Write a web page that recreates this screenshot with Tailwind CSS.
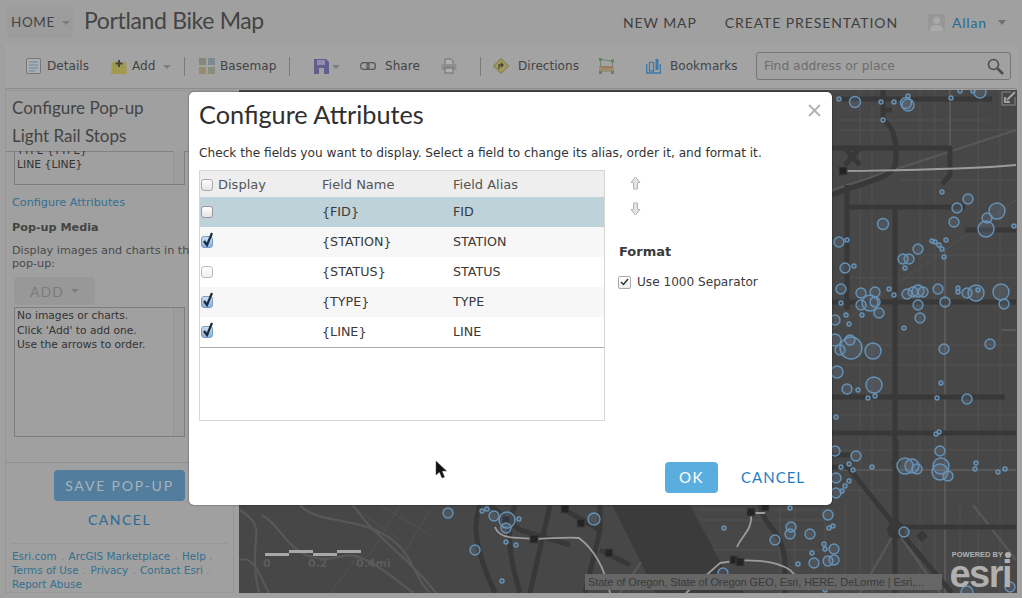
<!DOCTYPE html>
<html lang="en">
<head>
<meta charset="UTF-8">
<title>Portland Bike Map</title>
<script src="https://cdn.jsdelivr.net/npm/@tailwindcss/browser@4"></script>
</head>
<body class="bg-[#a0a0a0]">
<div class="relative w-[1022px] h-[598px] overflow-hidden bg-[#a0a0a0] font-['DejaVu_Sans',sans-serif] text-[#3c3c3c]">

  <!-- Top header -->
  <header class="flex items-center h-[44px] pl-[7px] font-['Lato',sans-serif]">
    <div class="flex items-center w-[66px] h-[31px] rounded bg-[#9c9c9c] pl-[4px] text-[13.500px] tracking-[0.6px] text-[#444]">HOME<span class="ml-[7px] mt-[1px] border-x-[4px] border-t-[4px] border-x-transparent border-t-[#7d7d7d]"></span></div>
    <h1 class="ml-[11px] text-[23px] leading-none text-[#444] pb-[4px] tracking-[-0.35px]">Portland Bike Map</h1>
    <a class="ml-auto text-[14px] tracking-[0.9px] text-[#3f3f3f]">NEW MAP</a>
    <a class="ml-[28px] text-[14px] tracking-[0.9px] text-[#3f3f3f]">CREATE PRESENTATION</a>
    <svg class="ml-[30px]" width="17" height="17" viewBox="0 0 17 17"><rect width="17" height="17" fill="#979797"/><circle cx="8.5" cy="6.5" r="3.6" fill="#a9a9a9"/><path d="M2 17c0-5 3-6 6.500-6s6.500 1 6.500 6z" fill="#a9a9a9"/></svg>
    <span class="ml-[7px] text-[14px] tracking-[0.8px] text-[#2a6a94] w-[46px]">Allan</span>
    <span class="border-x-[4px] border-t-[5px] border-x-transparent border-t-[#6f6f6f] mr-[16px]"></span>
  </header>

  <!-- Toolbar -->
  <div class="flex items-center h-[45px] ml-[5px] mr-[5px] bg-[#a3a3a3] border-b border-[#8c8c8c] text-[12.100px] text-[#444] whitespace-nowrap">
    <svg class="ml-[21px]" width="15" height="16" viewBox="0 0 15 16"><rect x=".5" y=".5" width="14" height="15" rx="1.500" fill="#a9aeb2" stroke="#777"/><path d="M3 4h9M3 7h9M3 10h9M3 13h6" stroke="#6f8496"/></svg>
    <span class="ml-[6px] w-[41px]">Details</span>
    <svg class="ml-[23px]" width="16" height="15" viewBox="0 0 16 15"><path d="M1 3h14l1 12H0z" fill="#a29a4e"/><path d="M8 1v7M4.500 4.500h7" stroke="#444" stroke-width="2"/></svg>
    <span class="ml-[5px] w-[23px]">Add</span>
    <span class="ml-[8px] mt-[2px] border-x-[4px] border-t-[4px] border-x-transparent border-t-[#7d7d7d]"></span>
    <span class="ml-[13px] w-px h-[19px] bg-[#7b7b7b]"></span>
    <svg class="ml-[14px]" width="16" height="16" viewBox="0 0 16 16"><rect width="7" height="7" fill="#86867c"/><rect x="9" width="7" height="7" fill="#7a8a92"/><rect y="9" width="7" height="7" fill="#988c6c"/><rect x="9" y="9" width="7" height="7" fill="#84907c"/></svg>
    <span class="ml-[5px] w-[55px]">Basemap</span>
    <span class="ml-[14px] w-px h-[19px] bg-[#7b7b7b]"></span>
    <svg class="ml-[24px]" width="15" height="15" viewBox="0 0 15 15"><path d="M0 0h12l3 3v12H0z" fill="#635f8c"/><rect x="3" y="1" width="8" height="5" fill="#8f8db0"/><rect x="5" y="9" width="5" height="6" fill="#a0a0a0"/></svg>
    <span class="ml-[3px] mt-[2px] border-x-[4px] border-t-[4px] border-x-transparent border-t-[#7d7d7d]"></span>
    <svg class="ml-[20px]" width="16" height="8" viewBox="0 0 16 8" fill="none" stroke="#555" stroke-width="1.200"><rect x=".6" y=".6" width="8.500" height="6.800" rx="3"/><rect x="6.900" y=".6" width="8.500" height="6.800" rx="3"/></svg>
    <span class="ml-[9px] w-[35px]">Share</span>
    <svg class="ml-[21px]" width="16" height="16" viewBox="0 0 16 16"><path d="M4 6V1h6l2 2v3" fill="#b0b0b0" stroke="#6f6f6f"/><rect x=".5" y="6" width="15" height="6" rx="1.500" fill="#8e8e8e"/><rect x="4" y="10" width="8" height="5" fill="#b0b0b0" stroke="#6f6f6f"/></svg>
    <span class="ml-[23px] w-px h-[19px] bg-[#7b7b7b]"></span>
    <svg class="ml-[12px]" width="16" height="16" viewBox="0 0 16 16"><path d="M8 .5L15.500 8 8 15.500.5 8z" fill="#a2985c" stroke="#77704a"/><path d="M6 11V7h4M8 5l2 2-2 2" fill="none" stroke="#444" stroke-width="1.300"/></svg>
    <span class="ml-[9px] w-[60px]">Directions</span>
    <svg class="ml-[21px]" width="15" height="16" viewBox="0 0 15 16"><path d="M1.500 1.500L13.500 3v10H1.500z" fill="none" stroke="#66896a"/><rect y="8" width="15" height="5" fill="#a3896a"/><path d="M3 8v2M6 8v2M9 8v2M12 8v2" stroke="#7a6a50"/><g fill="#5a8a5c"><rect width="3" height="3"/><rect x="12" y="1.500" width="3" height="3"/><rect y="13" width="3" height="3"/><rect x="12" y="13" width="3" height="3"/></g></svg>
    <svg class="ml-[32px]" width="15" height="15" viewBox="0 0 15 15" fill="none" stroke="#3f7aa8" stroke-width="1.300"><path d="M.7 5v9h13.600V5"/><path d="M7.500 14V4C6.500 3 5 3 3.500 3.500V12c1.500-.5 3-.5 4 1"/><rect x="9.500" y="0" width="3" height="11" fill="#3f7aa8" stroke="none"/></svg>
    <span class="ml-[9px] w-[67px]">Bookmarks</span>
    <div class="flex items-center justify-between ml-[19px] w-[255px] h-[28px] rounded-[3px] border border-[#767676] bg-[#a1a1a1] pl-[7px] pr-[6px] text-[12.300px] text-[#6d6d6d]">
      <span>Find address or place</span>
      <svg width="17" height="17" viewBox="0 0 17 17" fill="none" stroke="#4d4d4d"><circle cx="6.500" cy="6.500" r="5" stroke-width="1.600"/><path d="M10.500 10.500L16 16" stroke-width="2.600"/></svg>
    </div>
  </div>

  <!-- Main -->
  <div class="flex h-[505px] ml-[5px] mr-[5px] mt-[1px]">
    <aside class="flex flex-col w-[229px] h-[503px] border border-[#979797] text-[11.200px]">
      <div class="h-[61px] pl-[6px] font-['Lato',sans-serif] text-[17px] leading-[28px] text-[#444] pt-[3px] border-b border-[#828282]">
        <div>Configure Pop-up</div>
        <div>Light Rail Stops</div>
      </div>
      <div class="flex-1 pl-[8px] min-h-0">
        <div class="relative w-[171px] h-[34px] -mt-px border border-[#7d7d7d] border-t-0 overflow-hidden text-[10.800px] leading-[14px] pl-[2px] text-[#333]">
          <div class="-mt-[7px]">TYPE {TYPE}</div>
          <div>LINE {LINE}</div>
          <span class="absolute right-0 top-0 bottom-0 w-[11px] border-l border-[#949494] bg-[#9c9c9c]"></span>
        </div>
        <a class="block -ml-[2px] mt-[10px] leading-[15px] text-[#33708f]">Configure Attributes</a>
        <div class="-ml-[2px] mt-[10px] font-bold leading-[15px] text-[#444]">Pop-up Media</div>
        <p class="-ml-[2px] mt-[9px] w-[230px] leading-[13px] text-[#4a4a4a] whitespace-nowrap">Display images and charts in the<br>pop-up:</p>
        <div class="flex items-center justify-center gap-[7px] w-[81px] h-[28px] mt-[7px] rounded bg-[#989898] font-['Lato',sans-serif] text-[14px] tracking-[1px] text-[#7c7c7c]">ADD<span class="border-x-[4px] border-t-[4px] border-x-transparent border-t-[#7d7d7d]"></span></div>
        <div class="relative w-[171px] h-[130px] mt-[2px] border border-[#7d7d7d] text-[10.700px] leading-[14.500px] pl-[2px] pt-[1px] text-[#333]">
          No images or charts.<br>Click 'Add' to add one.<br>Use the arrows to order.
          <span class="absolute right-0 top-0 bottom-0 w-[11px] border-l border-[#949494] bg-[#9c9c9c]"></span>
        </div>
      </div>
      <div class="h-[130px] shrink-0 border-t border-[#8d8d8d] flex flex-col items-center font-['Lato',sans-serif]">
        <div class="flex items-center justify-center w-[131px] h-[31px] mt-[7px] rounded bg-[#527d9c] text-[14px] tracking-[1.800px] text-[#a6b3bc]">SAVE POP-UP</div>
        <div class="mt-[8px] text-[14px] tracking-[1.500px] text-[#2a6a94]">CANCEL</div>
        <div class="self-stretch mx-[5px] mt-[13px] pt-[5px] border-t border-[#979797] pl-[1px] font-['DejaVu_Sans',sans-serif] text-[10.400px] leading-[14px] text-[#35708f]">
          <div>Esri.com <span class="text-[#808080] mx-[1px]">.</span> ArcGIS Marketplace <span class="text-[#808080] mx-[1px]">.</span> Help <span class="text-[#808080]">.</span></div>
          <div>Terms of Use <span class="text-[#808080] mx-[1px]">.</span> Privacy <span class="text-[#808080] mx-[1px]">.</span> Contact Esri <span class="text-[#808080]">.</span></div>
          <div>Report Abuse</div>
        </div>
      </div>
    </aside>

    <!-- Map -->
    <div class="relative ml-[5px] w-[778px] h-[503px] bg-[#474747] overflow-hidden">
      <svg class="absolute inset-0" width="778" height="503" viewBox="239 90 778 503" fill="none">
        <!-- street grid -->
        <g stroke="#525252" stroke-width="1">
          <path d="M840 130H1016M840 120H990M900 180H1016M900 255H1016M840 278H1016M840 345H1016M840 365H1016M840 415H1016M840 450H1016M840 490H1016M700 510H832M700 520H832M700 550H832"/>
          <path d="M860 90V593M872 90V593M920 90V593M935 90V593M978 90V593M1000 90V593M780 505V593M795 505V593M825 505V593M845 505V593M960 505V593"/>
          <path d="M832 330L1016 200M350 505l50 35M380 505l50 30M400 505l-30 50M430 510l-30 50M330 593l30-40"/>
        </g>
        <g stroke="#585858" stroke-width="2.200">
          <path d="M950 90V148M945 250V593M1002 330H1016M840 470H1016M973 505L1016 560M896 530L860 593M896 530L940 593"/>
          <path d="M240 510c12 8 18 14 16 28-1 16-3 28 3 55M262 515c18 10 25 35 50 42s30-8 52 2 34 24 50 34M300 505c15 18 55 12 85 30s25 38 45 58M239 560c15-5 20 15 30 33M436 593c-30-40-70-60-90-100M620 593l60-88M832 190L1016 130"/>
        </g>
        <!-- river -->
        <path d="M612 505H690L722 565L745 593H655L640 560Z" fill="#3b3b3b"/>
        <!-- main roads -->
        <g stroke="#383838" stroke-width="5" stroke-linejoin="round">
          <path d="M883 90V120C895 128 896 140 896 160C896 178 870 180 832 195M840 99H992M883 110H892"/>
          <path d="M832 148H950V175L942 184M845 148L860 165M860 148L845 165M847 185V310M847 207H965M895 207V593M965 230H1016M832 302H1016M832 397H1005M832 433H1016M820 467H848M848 467L896 527L952 593M896 527H1016M896 440V527M832 455H850"/>
          <path d="M480 505C470 530 480 560 495 593M515 505C505 530 510 560 520 593M520 530L570 545M550 505L530 593M565 510L600 530L585 593M600 505V530M760 505C765 530 780 525 785 560V593M600 550L630 565M490 505L520 530"/>
        </g>
        <circle cx="896" cy="530" r="9" fill="#383838"/>
        <path d="M896 457l6 6-6 6-6-6zM922 530l6 6-6 6-6-6z" fill="#383838"/>
        <!-- light rail -->
        <g stroke="#9c9c9c" stroke-width="1.800">
          <path d="M843 171C900 170 960 170 1016 165"/>
          <path d="M495 527C500 540 515 537 534 539C560 538 570 537 579 538C595 550 605 570 610 593"/>
          <path d="M686 593L720 563C745 558 775 560 790 570L809 590M737 547C742 535 753 530 751 513M751 513H765"/>
        </g>
        <g fill="#242424" stroke="#3f3f3f">
          <rect x="839" y="167" width="8" height="8"/><rect x="530" y="535" width="8" height="8"/><rect x="577" y="519" width="8" height="8"/><rect x="605" y="549" width="8" height="8"/><rect x="561" y="505" width="8" height="8"/><rect x="502" y="516" width="8" height="8"/><rect x="730" y="556" width="8" height="8"/><rect x="736" y="558" width="8" height="8"/><rect x="747" y="508" width="8" height="8"/><rect x="761" y="503" width="8" height="8"/>
        </g>
        <!-- stops -->
        <g fill="#7b98b8" fill-opacity=".18" stroke="#6593b8" stroke-width="1.400">
          <circle cx="839" cy="99" r="2"/><circle cx="855" cy="102" r="5.500"/><circle cx="881" cy="102" r="2"/><circle cx="894" cy="102" r="2"/><circle cx="906" cy="103" r="5.500"/><circle cx="908" cy="105" r="6"/><circle cx="883" cy="120" r="2"/><circle cx="951" cy="98" r="2"/><circle cx="980" cy="92" r="6"/><circle cx="960" cy="91" r="2"/><circle cx="973" cy="91" r="2"/><circle cx="908" cy="96" r="2"/>
          <circle cx="942" cy="192" r="2"/><circle cx="968" cy="199" r="5"/><circle cx="957" cy="208" r="5"/><circle cx="997" cy="211" r="8"/><circle cx="987" cy="218" r="5"/><circle cx="954" cy="222" r="5"/><circle cx="986" cy="229" r="8"/><circle cx="1014" cy="226" r="2"/><circle cx="883" cy="224" r="5.500"/><circle cx="839" cy="242" r="5"/><circle cx="847" cy="240" r="2"/><circle cx="918" cy="249" r="5"/><circle cx="932" cy="241" r="2"/><circle cx="935" cy="242" r="2"/><circle cx="939" cy="245" r="2"/><circle cx="942" cy="249" r="2"/><circle cx="946" cy="240" r="2"/><circle cx="944" cy="257" r="2"/><circle cx="903" cy="259" r="5"/><circle cx="909" cy="259" r="5"/><circle cx="905" cy="268" r="2"/><circle cx="845" cy="268" r="5"/><circle cx="854" cy="266" r="2"/>
          <circle cx="841" cy="289" r="5"/><circle cx="861" cy="293" r="5"/><circle cx="875" cy="292" r="5"/><circle cx="889" cy="289" r="2"/><circle cx="894" cy="295" r="2"/><circle cx="907" cy="294" r="5"/><circle cx="913" cy="292" r="5"/><circle cx="918" cy="291" r="6"/><circle cx="923" cy="292" r="5"/><circle cx="938" cy="289" r="5"/><circle cx="945" cy="302" r="5"/><circle cx="958" cy="292" r="2"/><circle cx="958" cy="288" r="2"/><circle cx="967" cy="293" r="5"/><circle cx="976" cy="293" r="8"/><circle cx="1001" cy="292" r="8"/><circle cx="1004" cy="304" r="5"/><circle cx="978" cy="290" r="2"/><circle cx="870" cy="303" r="8"/><circle cx="861" cy="305" r="5"/><circle cx="875" cy="302" r="5"/><circle cx="879" cy="313" r="5"/><circle cx="918" cy="305" r="5"/><circle cx="920" cy="318" r="5"/><circle cx="841" cy="303" r="2"/><circle cx="846" cy="315" r="2"/><circle cx="862" cy="315" r="2"/><circle cx="849" cy="324" r="2"/><circle cx="835" cy="320" r="5"/><circle cx="904" cy="328" r="2"/><circle cx="835" cy="340" r="6"/><circle cx="850" cy="340" r="5"/>
          <circle cx="851" cy="348" r="11"/><circle cx="873" cy="351" r="8"/><circle cx="840" cy="350" r="5"/><circle cx="944" cy="349" r="5"/><circle cx="990" cy="344" r="5"/><circle cx="837" cy="372" r="6"/><circle cx="941" cy="383" r="2"/><circle cx="874" cy="385" r="8"/><circle cx="847" cy="389" r="5"/><circle cx="858" cy="390" r="2"/><circle cx="868" cy="398" r="2"/><circle cx="875" cy="396" r="2"/><circle cx="937" cy="398" r="2"/><circle cx="967" cy="399" r="5"/><circle cx="836" cy="417" r="2"/><circle cx="939" cy="432" r="2"/><circle cx="936" cy="434" r="2"/><circle cx="940" cy="451" r="5"/><circle cx="856" cy="456" r="5"/><circle cx="835" cy="451" r="5"/><circle cx="905" cy="466" r="8"/><circle cx="912" cy="466" r="7"/><circle cx="917" cy="469" r="5"/><circle cx="941" cy="466" r="8"/><circle cx="940" cy="472" r="8"/><circle cx="948" cy="476" r="5"/><circle cx="872" cy="467" r="2"/><circle cx="841" cy="467" r="2"/><circle cx="849" cy="464" r="2"/><circle cx="853" cy="470" r="2"/><circle cx="976" cy="463" r="2"/><circle cx="975" cy="469" r="2"/><circle cx="998" cy="472" r="2"/><circle cx="1005" cy="469" r="2"/><circle cx="836" cy="478" r="5"/><circle cx="849" cy="481" r="2"/><circle cx="845" cy="486" r="2"/><circle cx="842" cy="491" r="2"/><circle cx="836" cy="493" r="5"/>
          <circle cx="448" cy="513" r="5"/><circle cx="494" cy="516" r="5"/><circle cx="507" cy="520" r="8"/><circle cx="506" cy="528" r="5"/><circle cx="482" cy="511" r="2"/><circle cx="487" cy="509" r="2"/><circle cx="519" cy="519" r="2"/><circle cx="594" cy="519" r="6"/><circle cx="475" cy="550" r="5"/><circle cx="506" cy="542" r="2"/><circle cx="516" cy="545" r="2"/><circle cx="502" cy="581" r="2"/><circle cx="828" cy="515" r="5"/><circle cx="791" cy="527" r="5"/><circle cx="790" cy="534" r="5"/><circle cx="775" cy="540" r="5"/><circle cx="810" cy="534" r="5"/><circle cx="724" cy="528" r="2"/><circle cx="790" cy="508" r="2"/><circle cx="833" cy="526" r="2"/><circle cx="829" cy="528" r="2"/><circle cx="824" cy="544" r="2"/><circle cx="825" cy="549" r="2"/><circle cx="834" cy="549" r="5"/><circle cx="812" cy="553" r="2"/><circle cx="814" cy="563" r="5"/><circle cx="828" cy="561" r="5"/><circle cx="834" cy="560" r="5"/><circle cx="798" cy="564" r="2"/><circle cx="723" cy="573" r="5"/><circle cx="904" cy="532" r="5"/><circle cx="967" cy="592" r="6"/><circle cx="825" cy="590" r="2"/><circle cx="1010" cy="587" r="5"/>
        </g>
      </svg>

      <!-- edit icon -->
      <svg class="absolute right-[1px] top-[1px]" width="15" height="15" viewBox="0 0 15 15" fill="none"><path d="M10 1H1v13h13V6" stroke="#8a8a8a"/><path d="M14 1L6 9M4 6v5h5" stroke="#a0a0a0" stroke-width="2.200"/></svg>

      <!-- scale bar -->
      <div class="absolute left-[26px] top-[460px] flex items-start">
        <span class="w-[24px] h-[3px] mt-[3px] bg-[#a8a8a8]"></span><span class="w-[24px] h-[3px] bg-[#a8a8a8]"></span><span class="w-[24px] h-[3px] mt-[3px] bg-[#a8a8a8]"></span><span class="w-[24px] h-[3px] bg-[#a8a8a8]"></span>
      </div>
      <div class="absolute left-[24px] top-[466px] text-[11px] font-bold text-[#5c5c5c]">0</div>
      <div class="absolute left-[69px] top-[466px] text-[11px] font-bold text-[#5c5c5c]">0.2</div>
      <div class="absolute left-[117px] top-[466px] text-[11px] font-bold text-[#5c5c5c]">0.4mi</div>

      <!-- attribution -->
      <div class="absolute left-[346px] top-[484px] w-[357px] h-[16px] bg-[#666666] pl-[3px] font-['Liberation_Sans',sans-serif] text-[11px] leading-[16px] tracking-[-0.09px] text-[#3a3a3a] whitespace-nowrap overflow-hidden">State of Oregon, State of Oregon GEO, Esri, HERE, DeLorme | Esri,...</div>

      <!-- logo -->
      <div class="absolute right-[6px] bottom-[4px] flex flex-col items-end text-[#b0b0b0] font-['Liberation_Sans',sans-serif]">
        <div class="flex items-center gap-[2px] text-[7.500px] font-bold leading-[8px]">POWERED BY<span class="w-[6px] h-[6px] rounded-full bg-[#b0b0b0]"></span></div>
        <div class="text-[38px] font-bold leading-[30px] tracking-[-1.500px]">esri</div>
      </div>
    </div>
  </div>

  <!-- Modal -->
  <div class="absolute left-[189px] top-[92px] w-[643px] h-[413px] rounded-[5px] bg-white shadow-[0_0_2px_rgba(0,0,0,0.6)]">
    <h2 class="absolute left-[10px] top-[5px] font-['Lato',sans-serif] text-[25.300px] leading-[34px] text-[#2f2f2f]">Configure Attributes</h2>
    <svg class="absolute right-[11px] top-[12px]" width="13" height="13" viewBox="0 0 13 13" stroke="#b4b4b4" stroke-width="2"><path d="M1 1l11 11M12 1L1 12"/></svg>
    <p class="absolute left-[10px] top-[53px] text-[12.150px] leading-[16px] text-[#333] whitespace-nowrap">Check the fields you want to display. Select a field to change its alias, order it, and format it.</p>

    <!-- Fields table -->
    <div class="absolute left-[10px] top-[78px] w-[406px] h-[251px] border border-[#d8d8d0] text-[12.700px] text-[#3a3a3a]">
      <div class="grid grid-cols-[122px_131px_1fr] items-center h-[26px] pt-[1px] bg-[#eeeeee] text-[#555] text-[13px]">
        <div class="flex items-center"><span class="ml-[1px] w-[12px] h-[12px] rounded-[3px] border border-[#aaa] bg-gradient-to-b from-white to-[#e4e4e4]"></span><span class="ml-[5px]">Display</span></div><div>Field Name</div><div>Field Alias</div>
      </div>
      <div class="grid grid-cols-[122px_131px_1fr] items-center h-[30px] bg-[#bed2d9]">
        <div><span class="block ml-[1px] w-[12px] h-[12px] rounded-[3px] border border-[#999] bg-gradient-to-b from-white to-[#e4e4e4]"></span></div><div>{FID}</div><div>FID</div>
      </div>
      <div class="grid grid-cols-[122px_131px_1fr] items-center h-[30px] bg-[#f7f7f7]">
        <div class="relative"><span class="block ml-[1px] w-[12px] h-[12px] rounded-[3px] border border-[#7a9cc0] bg-gradient-to-b from-[#cfe0f2] to-[#86afe0]"></span><svg class="absolute left-[2px] -top-[4px]" width="12" height="15" viewBox="0 0 12 15" fill="none" stroke="#1c2a3a" stroke-width="2.200"><path d="M2 9l3 4 5-12"/></svg></div><div>{STATION}</div><div>STATION</div>
      </div>
      <div class="grid grid-cols-[122px_131px_1fr] items-center h-[30px] bg-white">
        <div><span class="block ml-[1px] w-[12px] h-[12px] rounded-[3px] border border-[#bbb] bg-gradient-to-b from-white to-[#eeeeee]"></span></div><div>{STATUS}</div><div>STATUS</div>
      </div>
      <div class="grid grid-cols-[122px_131px_1fr] items-center h-[30px] bg-[#f7f7f7]">
        <div class="relative"><span class="block ml-[1px] w-[12px] h-[12px] rounded-[3px] border border-[#7a9cc0] bg-gradient-to-b from-[#cfe0f2] to-[#86afe0]"></span><svg class="absolute left-[2px] -top-[4px]" width="12" height="15" viewBox="0 0 12 15" fill="none" stroke="#1c2a3a" stroke-width="2.200"><path d="M2 9l3 4 5-12"/></svg></div><div>{TYPE}</div><div>TYPE</div>
      </div>
      <div class="grid grid-cols-[122px_131px_1fr] items-center h-[31px] bg-white border-b border-[#aaaaaa]">
        <div class="relative"><span class="block ml-[1px] w-[12px] h-[12px] rounded-[3px] border border-[#7a9cc0] bg-gradient-to-b from-[#cfe0f2] to-[#86afe0]"></span><svg class="absolute left-[2px] -top-[4px]" width="12" height="15" viewBox="0 0 12 15" fill="none" stroke="#1c2a3a" stroke-width="2.200"><path d="M2 9l3 4 5-12"/></svg></div><div>{LINE}</div><div>LINE</div>
      </div>
    </div>

    <!-- Order arrows -->
    <svg class="absolute left-[441px] top-[84px]" width="11" height="14" viewBox="0 0 11 14" fill="#e4e4e4" stroke="#b4b4b4"><path d="M5.500 1L10 6.500H7.500V13h-4V6.500H1z"/></svg>
    <svg class="absolute left-[441px] top-[110px]" width="11" height="14" viewBox="0 0 11 14" fill="#e4e4e4" stroke="#b4b4b4"><path d="M5.500 13L10 7.500H7.500V1h-4v6.500H1z"/></svg>

    <!-- Format -->
    <div class="absolute left-[430px] top-[152px] text-[13px] font-bold leading-[16px] text-[#3a3a3a]">Format</div>
    <div class="absolute left-[429px] top-[182px] flex items-center text-[12.100px] leading-[16px] text-[#3a3a3a]">
      <span class="flex items-center justify-center w-[13px] h-[13px] rounded-[2px] border border-[#aaa] bg-gradient-to-b from-white to-[#ececec]"><svg width="9" height="8" viewBox="0 0 9 8" fill="none" stroke="#333" stroke-width="1.500"><path d="M1 4l2.500 2.500L8 1"/></svg></span>
      <span class="ml-[6px]">Use 1000 Separator</span>
    </div>

    <!-- Actions -->
    <div class="absolute left-[476px] top-[370px] flex items-center justify-center w-[53px] h-[31px] rounded bg-[#5aaedf] font-['Lato',sans-serif] text-[15px] tracking-[1.500px] text-white">OK</div>
    <div class="absolute left-[552px] top-[376px] font-['Lato',sans-serif] text-[15px] leading-[18px] tracking-[1px] text-[#1e7dc2]">CANCEL</div>
  </div>

  <!-- Mouse cursor -->
  <svg class="absolute left-[435px] top-[461px]" width="12" height="19" viewBox="0 0 12 19"><path d="M1 0v14l3.500-3 2.500 6 2.500-1-2.500-6h4.500z" fill="#111" stroke="#555" stroke-width=".5"/></svg>
</div>
</body>
</html>
